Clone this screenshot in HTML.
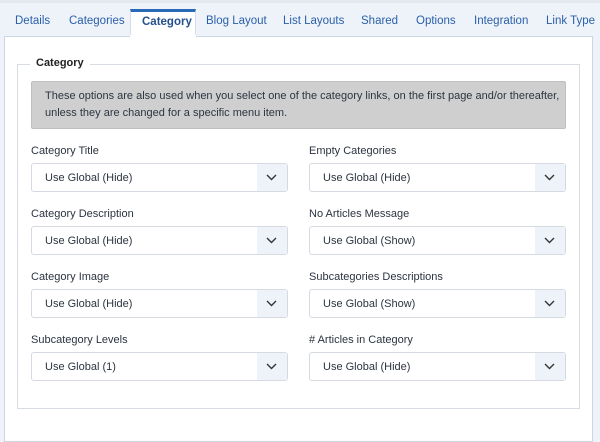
<!DOCTYPE html>
<html><head><meta charset="utf-8"><style>
*{box-sizing:border-box;margin:0;padding:0}
body{width:600px;height:442px;overflow:hidden;background:#eef3fa;font-family:"Liberation Sans",sans-serif;position:relative}
.top{position:absolute;left:0;top:0;width:600px;height:3px;background:#e4e8ee}
.tab{position:absolute;top:15px;font-size:11.5px;color:#2a5fa8}
.active{position:absolute;left:130px;top:9px;width:66px;height:28px;background:#fff;border-top:3px solid #2a69b8;border-left:1px solid #d5dde8;border-right:1px solid #d5dde8}
.active span{position:absolute;left:11px;top:4px;font-weight:bold;color:#24508e;font-size:11.5px}
.panel{position:absolute;left:4px;top:36px;width:589px;height:406px;background:#fff;border:1px solid #cdd6e3}
.panel2{position:absolute;left:130px;top:35px;width:66px;height:3px;background:#fff}
.fs{position:absolute;left:17px;top:64px;width:563px;height:345px;border:1px solid #d8dde3}
.legend{position:absolute;left:30px;top:57px;background:#fff;padding:0 6px;font-size:11px;font-weight:bold;color:#222}
.alert{position:absolute;left:31px;top:81px;width:535px;height:48px;background:#cfcfcf;border:1px solid #bfbfbf;border-radius:2px;font-size:11px;color:#2c3440;line-height:17px;padding:6px 0 0 13px}
.lbl{position:absolute;font-size:11px;color:#2c3440}
.sel{position:absolute;width:257px;height:29px;border:1px solid #d5dae0;border-radius:3px;background:#fff;font-size:11px;color:#2c3440;padding:8px 0 0 13px}
.sel b{position:absolute;right:0;top:0;width:30px;height:27px;background:#eef3fa;border-radius:0 3px 3px 0}
.sel svg{position:absolute;right:10px;top:10px}
</style></head><body>
<div class="top"></div>
<div class="panel"></div>
<div class="active"><span>Category</span></div>
<div class="panel2"></div>
<span class="tab" style="left:15px">Details</span>
<span class="tab" style="left:69px">Categories</span>
<span class="tab" style="left:206px">Blog Layout</span>
<span class="tab" style="left:283px">List Layouts</span>
<span class="tab" style="left:361px">Shared</span>
<span class="tab" style="left:416px">Options</span>
<span class="tab" style="left:474px">Integration</span>
<span class="tab" style="left:546px">Link Type</span>
<div class="fs"></div>
<div class="legend">Category</div>
<div class="alert">These options are also used when you select one of the category links, on the first page and/or thereafter,<br>unless they are changed for a specific menu item.</div>

<div class="lbl" style="left:31px;top:145px">Category Title</div>
<div class="sel" style="left:31px;top:163px">Use Global (Hide)<b></b><svg width="11" height="7" viewBox="0 0 11 7"><path d="M1 1l4.5 4.5L10 1" fill="none" stroke="#333" stroke-width="1.4"/></svg></div>
<div class="lbl" style="left:309px;top:145px">Empty Categories</div>
<div class="sel" style="left:309px;top:163px">Use Global (Hide)<b></b><svg width="11" height="7" viewBox="0 0 11 7"><path d="M1 1l4.5 4.5L10 1" fill="none" stroke="#333" stroke-width="1.4"/></svg></div>

<div class="lbl" style="left:31px;top:208px">Category Description</div>
<div class="sel" style="left:31px;top:226px">Use Global (Hide)<b></b><svg width="11" height="7" viewBox="0 0 11 7"><path d="M1 1l4.5 4.5L10 1" fill="none" stroke="#333" stroke-width="1.4"/></svg></div>
<div class="lbl" style="left:309px;top:208px">No Articles Message</div>
<div class="sel" style="left:309px;top:226px">Use Global (Show)<b></b><svg width="11" height="7" viewBox="0 0 11 7"><path d="M1 1l4.5 4.5L10 1" fill="none" stroke="#333" stroke-width="1.4"/></svg></div>

<div class="lbl" style="left:31px;top:271px">Category Image</div>
<div class="sel" style="left:31px;top:289px">Use Global (Hide)<b></b><svg width="11" height="7" viewBox="0 0 11 7"><path d="M1 1l4.5 4.5L10 1" fill="none" stroke="#333" stroke-width="1.4"/></svg></div>
<div class="lbl" style="left:309px;top:271px">Subcategories Descriptions</div>
<div class="sel" style="left:309px;top:289px">Use Global (Show)<b></b><svg width="11" height="7" viewBox="0 0 11 7"><path d="M1 1l4.5 4.5L10 1" fill="none" stroke="#333" stroke-width="1.4"/></svg></div>

<div class="lbl" style="left:31px;top:334px">Subcategory Levels</div>
<div class="sel" style="left:31px;top:352px">Use Global (1)<b></b><svg width="11" height="7" viewBox="0 0 11 7"><path d="M1 1l4.5 4.5L10 1" fill="none" stroke="#333" stroke-width="1.4"/></svg></div>
<div class="lbl" style="left:309px;top:334px"># Articles in Category</div>
<div class="sel" style="left:309px;top:352px">Use Global (Hide)<b></b><svg width="11" height="7" viewBox="0 0 11 7"><path d="M1 1l4.5 4.5L10 1" fill="none" stroke="#333" stroke-width="1.4"/></svg></div>
</body></html>
